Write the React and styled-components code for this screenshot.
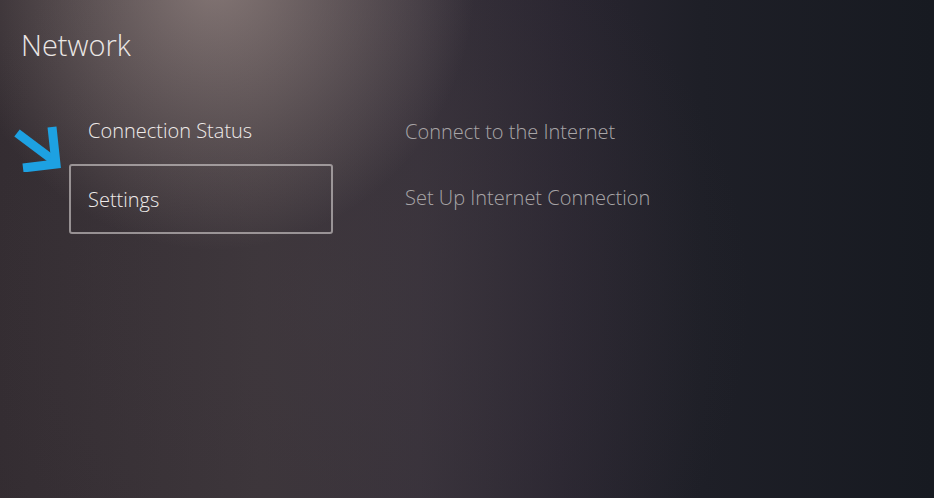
import React from "react";
import styled, { createGlobalStyle } from "styled-components";

const GlobalStyle = createGlobalStyle`
  html, body {
    margin: 0;
    padding: 0;
    background: #1a1b22;
  }
  #root {
    width: 934px;
    height: 498px;
    overflow: hidden;
  }
`;

const menuItems = [
  { id: "status", label: "Connection Status", detail: "Connect to the Internet" },
  { id: "settings", label: "Settings", detail: "Set Up Internet Connection", focused: true },
];

const App = () => {
  return (
    <>
      <GlobalStyle />
      <Screen>
        <Title>Network</Title>
        <Body>
          <Menu>
            {menuItems.map((item) => (
              <MenuItem key={item.id} $focused={item.focused}>
                {item.label}
              </MenuItem>
            ))}
          </Menu>
          <Details>
            {menuItems.map((item) => (
              <DetailRow key={item.id}>{item.detail}</DetailRow>
            ))}
          </Details>
        </Body>
        <Pointer viewBox="0 0 52 50" aria-hidden="true">
          <path d="M7 11 L43 38" />
          <path d="M42 5 L46 42 L13 46" />
        </Pointer>
      </Screen>
    </>
  );
};

const Screen = styled.div`
  position: relative;
  width: 934px;
  height: 498px;
  box-sizing: border-box;
  padding: 27px 0 0 21px;
  font-family: "Open Sans", "Noto Sans", sans-serif;
  background:
    radial-gradient(ellipse 260px 270px at 215px -20px, rgba(165, 148, 144, 0.68), rgba(165, 148, 144, 0) 100%),
    radial-gradient(ellipse 420px 420px at 330px 300px, rgba(70, 62, 68, 0.35), rgba(70, 62, 68, 0) 100%),
    linear-gradient(to right, #332c31 0%, #3b3439 28%, #37313a 45%, #2a2631 60%, #1e1f27 75%, #171a21 100%);
`;

const Title = styled.h1`
  margin: 0;
  font-size: 29px;
  font-weight: 300;
  line-height: 36px;
  color: #ebe7e5;
`;

const Body = styled.div`
  display: grid;
  grid-template-columns: 264px auto;
  column-gap: 72px;
  margin: 33px 0 0 48px;
`;

const Menu = styled.div`
  display: flex;
  flex-direction: column;
`;

const MenuItem = styled.div`
  height: 70px;
  box-sizing: border-box;
  display: flex;
  align-items: center;
  padding-left: 17px;
  font-size: 20px;
  font-weight: 300;
  color: #efebea;
  border: 2px solid ${({ $focused }) => ($focused ? "rgba(215, 210, 210, 0.6)" : "transparent")};
  border-radius: 3px;
  margin-top: -1px;
`;

const Details = styled.div`
  display: flex;
  flex-direction: column;
  padding-top: 2px;
`;

const DetailRow = styled.div`
  height: 66px;
  display: flex;
  align-items: center;
  font-size: 20px;
  font-weight: 300;
  color: #a8a5a7;
`;

const Pointer = styled.svg`
  position: absolute;
  left: 10px;
  top: 122px;
  width: 52px;
  height: 50px;
  fill: none;
  stroke: #1da1e2;
  stroke-width: 9;
  stroke-linejoin: miter;
`;

export default App;
